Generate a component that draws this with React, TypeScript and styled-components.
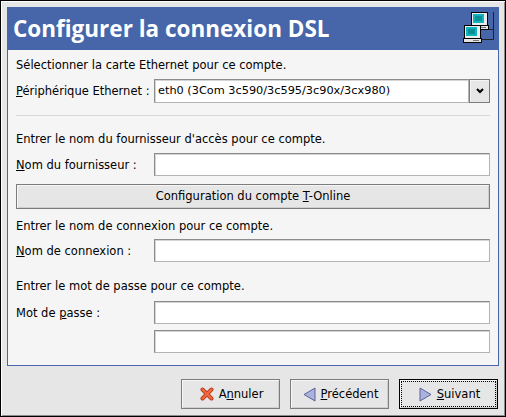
import React from "react";
import styled, { createGlobalStyle } from "styled-components";

const GlobalStyle = createGlobalStyle`
  html, body { margin: 0; padding: 0; background: #e6e6e6; }
  body { font-family: "DejaVu Sans", sans-serif; font-size: 11.5px; color: #000; }
`;

const Window = styled.div`
  width: 506px;
  height: 417px;
  box-sizing: border-box;
  border: 1px solid #000;
  box-shadow: inset 1px 1px 0 #fff, inset -1px -1px 0 #8c8c8c;
  background: #e6e6e6;
  padding: 6px 6px 0 6px;
  display: flex;
  flex-direction: column;
`;

const Panel = styled.div`
  height: 359px;
  flex: none;
  box-sizing: border-box;
  border: 1px solid #4666a9;
  background: #f5f5f5;
  display: flex;
  flex-direction: column;
`;

const Banner = styled.div`
  height: 42px;
  flex: none;
  background: #4666a9;
  display: flex;
  align-items: center;
  justify-content: space-between;
  padding: 0 3px 0 5px;
`;

const Title = styled.h1`
  margin: 0 0 2px;
  color: #fff;
  font-family: "Open Sans", sans-serif;
  font-size: 22.5px;
  font-weight: bold;
`;

const Body = styled.div`
  flex: 1;
  padding: 0 8px;
  display: flex;
  flex-direction: column;
`;

const Note = styled.div<{ $top: number }>`
  margin-top: ${(p) => p.$top}px;
  height: 15px;
  line-height: 15px;
  white-space: nowrap;
`;

const Row = styled.div<{ $top: number }>`
  margin-top: ${(p) => p.$top}px;
  display: flex;
  align-items: center;
`;

const Label = styled.label`
  width: 138px;
  flex: none;
  white-space: nowrap;
`;

const Field = styled.div<{ $tall?: boolean }>`
  flex: 1;
  height: ${(p) => (p.$tall ? 24 : 23)}px;
  box-sizing: border-box;
  background: #fff;
  border: 1px solid #8c8c8c;
  border-bottom-color: #b4b4b4;
  border-right-color: #b4b4b4;
  box-shadow: inset 1px 1px 0 #d4d4d4;
  padding: 0 3px;
  font-size: 11.3px;
  line-height: 22px;
  white-space: nowrap;
`;

const ComboArrow = styled.div`
  width: 21px;
  height: 24px;
  flex: none;
  box-sizing: border-box;
  border: 1px solid #7c7c7c;
  box-shadow: inset 1px 1px 0 #f6f6f6;
  background: #e6e6e6;
  display: flex;
  align-items: center;
  justify-content: center;
`;

const Divider = styled.div`
  margin-top: 12px;
  height: 1px;
  background: #d8d8d8;
`;

const WideButton = styled.div`
  margin-top: 8px;
  height: 25px;
  box-sizing: border-box;
  border: 1px solid #7c7c7c;
  box-shadow: inset 1px 1px 0 #f6f6f6, inset -1px -1px 0 #cfcfcf;
  background: #e6e6e6;
  text-align: center;
  line-height: 23px;
`;

const Footer = styled.div`
  display: flex;
  justify-content: flex-end;
  align-items: flex-start;
  gap: 10px;
  padding: 13px 1px 0 0;
`;

const Button = styled.div<{ $focus?: boolean }>`
  width: 99px;
  height: 30px;
  box-sizing: border-box;
  border: 1px solid ${(p) => (p.$focus ? "#000" : "#7c7c7c")};
  box-shadow: inset 1px 1px 0 #f6f6f6, inset -1px -1px 0 #cfcfcf;
  background: #e6e6e6;
  display: flex;
  align-items: center;
  justify-content: center;
  gap: 5px;
  padding-left: 2px;
  ${(p) => p.$focus && "outline: 1px dotted #000; outline-offset: -3px;"}
`;

const Arrow = () => (
  <svg width="8" height="6" viewBox="0 0 8 6">
    <path d="M1 1 L4 4 L7 1" fill="none" stroke="#000" strokeWidth="2" />
  </svg>
);

const Cancel = () => (
  <svg width="14" height="14" viewBox="0 0 14 14">
    <path d="M2.5 2.5 L11.5 11.5 M11.5 2.5 L2.5 11.5" stroke="#b8391f" strokeWidth="4" strokeLinecap="round" />
    <path d="M2.5 2.5 L11.5 11.5 M11.5 2.5 L2.5 11.5" stroke="#ee6a3e" strokeWidth="2.4" strokeLinecap="round" />
  </svg>
);

const Back = () => (
  <svg width="13" height="15" viewBox="0 0 13 15">
    <path d="M12 1 V14 L1 7.5 Z" fill="#aab2e0" stroke="#5a6298" />
  </svg>
);

const Next = () => (
  <svg width="13" height="15" viewBox="0 0 13 15">
    <path d="M1 1 V14 L12 7.5 Z" fill="#aab2e0" stroke="#5a6298" />
  </svg>
);

const Computer = ({ x, y }: { x: number; y: number }) => (
  <g transform={`translate(${x} ${y})`}>
    <rect x="1.5" y="0.5" width="16" height="13" fill="#ececec" stroke="#000" />
    <rect x="3" y="2" width="11" height="9" fill="#0fb4bc" />
    <rect x="5" y="4" width="7" height="5" fill="#0a8f98" />
    <rect x="0.5" y="13.5" width="18" height="4" fill="#e4e4e4" stroke="#000" />
    <path d="M10 15.5 H16" stroke="#777" />
  </g>
);

const NetworkIcon = () => (
  <svg width="36" height="36" viewBox="0 0 36 36">
    <path d="M34.5 1 V28.5 H22 M34.5 18.5 H28" fill="none" stroke="#222" strokeWidth="1" />
    <Computer x={11} y={1} />
    <Computer x={4} y={14} />
  </svg>
);

export default function App() {
  return (
    <>
      <GlobalStyle />
      <Window>
        <Panel>
          <Banner>
            <Title>Configurer la connexion DSL</Title>
            <NetworkIcon />
          </Banner>
          <Body>
            <Note $top={8}>Sélectionner la carte Ethernet pour ce compte.</Note>
            <Row $top={6}>
              <Label>
                <u>P</u>ériphérique Ethernet :
              </Label>
              <Field $tall>eth0 (3Com 3c590/3c595/3c90x/3cx980)</Field>
              <ComboArrow>
                <Arrow />
              </ComboArrow>
            </Row>
            <Divider />
            <Note $top={16}>Entrer le nom du fournisseur d'accès pour ce compte.</Note>
            <Row $top={6}>
              <Label>
                <u>N</u>om du fournisseur :
              </Label>
              <Field />
            </Row>
            <WideButton>
              Configuration du compte <u>T</u>-Online
            </WideButton>
            <Note $top={10}>Entrer le nom de connexion pour ce compte.</Note>
            <Row $top={5}>
              <Label>
                <u>N</u>om de connexion :
              </Label>
              <Field />
            </Row>
            <Note $top={17}>Entrer le mot de passe pour ce compte.</Note>
            <Row $top={7}>
              <Label>
                Mot de <u>p</u>asse :
              </Label>
              <Field />
            </Row>
            <Row $top={6}>
              <Label />
              <Field />
            </Row>
          </Body>
        </Panel>
        <Footer>
          <Button>
            <Cancel />
            <span>
              A<u>n</u>nuler
            </span>
          </Button>
          <Button>
            <Back />
            <span>
              <u>P</u>récédent
            </span>
          </Button>
          <Button $focus>
            <Next />
            <span>
              <u>S</u>uivant
            </span>
          </Button>
        </Footer>
      </Window>
    </>
  );
}
